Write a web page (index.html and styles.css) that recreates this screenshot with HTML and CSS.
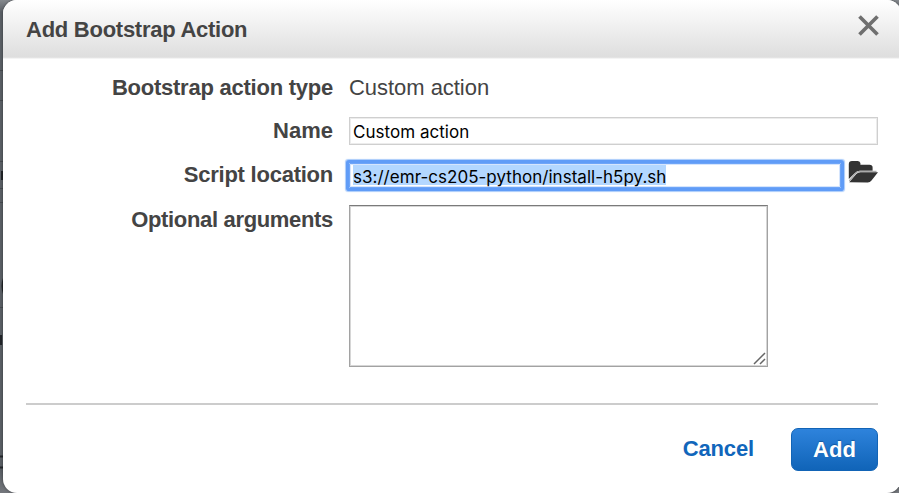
FILE: index.html
```html
<!DOCTYPE html>
<html lang="en">
<head>
<meta charset="utf-8">
<title>Add Bootstrap Action</title>
<link rel="stylesheet" href="styles.css">
</head>
<body>
<svg class="backdrop" width="8" height="493" viewBox="0 0 8 493"><path d="M0 70.5H8M0 100.5H8M0 161.5H8M0 188.5H8M0 202.5H8M0 307.5H8" stroke="#474b50"/><path d="M0 456.5H8M0 467.5H8" stroke="#25282c" stroke-width="2"/><path d="M4 278Q1 286 4 294M1 335V345M2 171V180" stroke="#222529" stroke-width="2" fill="none"/></svg>
<div class="dialog" role="dialog">
  <header class="header">
    <h1 class="title">Add Bootstrap Action</h1>
    <svg class="close" width="21" height="21" viewBox="0 0 21 21"><path d="M1.5 1.5 19.5 19.5M19.5 1.5 1.5 19.5" stroke="#6f6f6f" stroke-width="3.7" fill="none"/></svg>
  </header>
  <main class="form">
    <div class="row row-type"><span class="label">Bootstrap action type</span><span class="value">Custom action</span></div>
    <div class="row row-name"><span class="label">Name</span><div class="input"><span>Custom action</span></div></div>
    <div class="row row-script"><span class="label">Script location</span><div class="input focused"><span class="selected">s3://emr-cs205-python/install-h5py.sh</span></div>
      <svg class="folder" width="31" height="24" viewBox="0 0 31 24"><path d="M0.8 19V4.2Q0.8 1 4 1H9.5Q11.8 1 12.4 3V4.7H21.5Q24.6 4.7 24.6 7.5V10.7H12Q9 10.7 7 13Z" fill="#333"/><path d="M1.2 22.2 8.3 14Q10 12.3 12.5 12.3H30L23.5 20.5Q22 22.4 19.8 22.4Z" fill="#333"/><path d="M1.3 20.8 7.5 13.4Q9.3 11.4 12 11.4H28.5" stroke="#aaa" stroke-width="1.3" fill="none"/></svg>
    </div>
    <div class="row row-args"><span class="label">Optional arguments</span><div class="area"><svg class="grip" width="13" height="13" viewBox="0 0 13 13"><path d="M1 12 12 1M7 12 12 7" stroke="#666" stroke-width="1.5" fill="none"/></svg></div></div>
  </main>
  <footer class="footer"><a class="cancel">Cancel</a><div class="add">Add</div></footer>
</div>
</body>
</html>
```
FILE: styles.css
```css
* { box-sizing: border-box; }
body { margin: 0; width: 899px; height: 493px; overflow: hidden; background: linear-gradient(#85898e, #5b6066 12px, #5b6066 470px, #74777c); font-family: "Liberation Sans", Arial, sans-serif; color: #444; }
.backdrop { position: absolute; left: 0; top: 0; }
.dialog { position: relative; width: 898px; height: 493px; margin-left: 3px; background: #fff; border-radius: 14px; overflow: hidden; box-shadow: 0 0 3px rgba(0,0,0,.45); }
.header { height: 59px; padding: 0 22px 0 23px; display: flex; justify-content: space-between; align-items: flex-start; background: linear-gradient(#fff, #dedede 57px, #e9e9e9 58px, #fff 59px); }
.title { margin: 0; font-size: 22px; line-height: 26px; padding-top: 17px; white-space: nowrap; letter-spacing: -.26px; }
.close { margin-top: 15px; }
.form { height: 344px; }
.row { display: flex; align-items: flex-start; }
.row-type { height: 58px; }
.row-name { height: 41px; }
.row-script { height: 47px; }
.label { width: 330px; text-align: right; font-weight: bold; font-size: 22px; line-height: 26px; white-space: nowrap; margin-right: 16px; flex: none; letter-spacing: -.24px; }
.row-type .label, .row-type .value { margin-top: 16px; }
.row-name .label { letter-spacing: 0; margin-top: 1px; }
.row-script .label { margin-top: 4px; }
.row-args .label { margin-top: 2px; letter-spacing: -.33px; }
.value { font-size: 22px; line-height: 26px; letter-spacing: -.04px; }
.input { width: 529px; height: 28px; border: 1px solid #cfcfcf; box-shadow: inset 0 0 0 1px #ececec; padding-left: 3px; font-family: Inter, sans-serif; font-size: 17px; letter-spacing: .03px; line-height: 28px; color: #000; white-space: nowrap; }
.focused { width: 492px; height: 25px; margin-top: 5px; border: 1px solid #6ea5f8; box-shadow: inset 0 0 0 1px #d5e5fd, 0 0 0 3px #609cf7, 0 0 1px 4px #a9cbfb; line-height: 25px; border-radius: 1px; }
.selected { display: inline-block; height: 20px; line-height: 24px; margin-top: 1px; background: #b3d7ff; }
.folder { margin: 2px 0 0 7px; }
.area { width: 419px; height: 162px; border: 1px solid #a2a2a2; border-top-color: #7a7a7a; box-shadow: inset 0 0 0 1px #d6d6d6; display: flex; align-items: flex-end; justify-content: flex-end; padding: 0 1px 1px 0; }
.footer { height: 89px; margin: 0 23px; width: 852px; border-top: 2px solid #ccc; display: flex; justify-content: flex-end; align-items: flex-start; }
.cancel { font-size: 22px; line-height: 26px; font-weight: bold; color: #1166bb; margin: 31px 37px 0 0; letter-spacing: -.15px; }
.add { width: 87px; height: 43px; margin-top: 23px; border: 1px solid #1264b6; border-radius: 7px; background: linear-gradient(#2e83dc, #1064b8); color: #fff; font-size: 22px; font-weight: bold; line-height: 42px; text-align: center; text-shadow: 0 -1px 1px rgba(0,40,90,.4); }
```
